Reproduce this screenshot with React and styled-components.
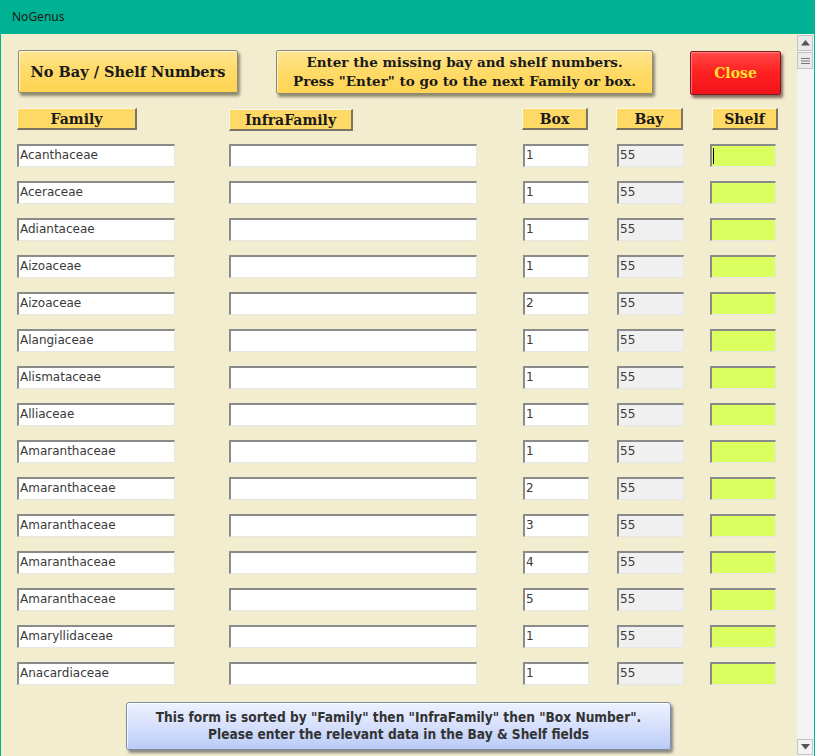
import React from 'react'
import styled, { createGlobalStyle } from 'styled-components'

const GlobalStyle = createGlobalStyle`
  html, body { margin: 0; padding: 0; background: #ffffff; }
  body { font-family: "DejaVu Sans", sans-serif; }
`

const rows = [
  ['Acanthaceae', '1'],
  ['Aceraceae', '1'],
  ['Adiantaceae', '1'],
  ['Aizoaceae', '1'],
  ['Aizoaceae', '2'],
  ['Alangiaceae', '1'],
  ['Alismataceae', '1'],
  ['Alliaceae', '1'],
  ['Amaranthaceae', '1'],
  ['Amaranthaceae', '2'],
  ['Amaranthaceae', '3'],
  ['Amaranthaceae', '4'],
  ['Amaranthaceae', '5'],
  ['Amaryllidaceae', '1'],
  ['Anacardiaceae', '1'],
]

const Window = styled.div`
  width: 815px;
  height: 756px;
  display: flex;
  flex-direction: column;
  box-sizing: border-box;
  border-left: 1px solid #00b294;
  border-right: 1px solid #00b294;
  overflow: hidden;
`

const TitleBar = styled.div`
  height: 34px;
  flex: none;
  background: #00b294;
  color: #1a1a1a;
  font-family: "Noto Sans", sans-serif;
  font-size: 12px;
  display: flex;
  align-items: center;
  padding-left: 11px;
  padding-bottom: 1px;
  box-sizing: border-box;
`

const Body = styled.div`
  flex: 1;
  display: flex;
  min-height: 0;
`

const Content = styled.div`
  flex: 1;
  background: #f3edd0;
  padding: 16px 0 0 16px;
  box-sizing: border-box;
`

const Toolbar = styled.div`
  display: flex;
  align-items: flex-start;
  height: 44px;
`

const SerifBold = `
  font-family: "DejaVu Serif", serif;
  font-weight: bold;
  color: #1a1a1a;
`

const YellowButton = styled.button`
  ${SerifBold}
  width: ${p => p.$w}px;
  height: ${p => p.$h}px;
  margin-left: ${p => p.$ml || 0}px;
  font-size: ${p => p.$fs || 14}px;
  line-height: 19px;
  padding: 0;
  border: 1px solid #8d8a7a;
  border-radius: 2px;
  background: linear-gradient(#ffe690 0%, #ffdb6b 45%, #ffd452 100%);
  box-shadow: 2px 3px 3px rgba(60, 55, 30, 0.55), inset 1px 1px 0 rgba(255,255,255,0.6);
  box-sizing: border-box;
  display: flex;
  flex-direction: column;
  align-items: center;
  justify-content: center;
  cursor: pointer;
`

const CloseButton = styled.button`
  ${SerifBold}
  color: #ffe22e;
  font-size: 14px;
  width: 91px;
  height: 44px;
  margin-left: 37px;
  margin-top: 1px;
  border: 1px solid #7a1a1a;
  border-radius: 2px;
  background: linear-gradient(#ff4a4a 0%, #ff2222 45%, #f0141c 100%);
  box-shadow: 2px 3px 3px rgba(60, 20, 20, 0.6), inset 1px 1px 0 rgba(255,160,160,0.6);
  box-sizing: border-box;
  cursor: pointer;
`

const Row = styled.div`
  display: flex;
  align-items: flex-start;
  margin-top: ${p => p.$mt}px;
`

const Header = styled.div`
  ${SerifBold}
  font-size: 14px;
  height: 22px;
  width: ${p => p.$w}px;
  margin-left: ${p => p.$ml}px;
  margin-top: ${p => p.$mt || 0}px;
  background: #ffd966;
  border-top: 1px solid #fbf6e6;
  border-left: 1px solid #fbf6e6;
  border-right: 2px solid #7a7562;
  border-bottom: 2px solid #7a7562;
  box-sizing: border-box;
  display: flex;
  align-items: center;
  justify-content: center;
  padding-top: 1px;
`

const Field = styled.div`
  position: relative;
  flex: none;
  height: 23px;
  width: ${p => p.$w}px;
  margin-left: ${p => p.$ml}px;
  background: ${p => p.$bg || '#ffffff'};
  border-top: 2px solid #8a8a8a;
  border-left: 2px solid #8a8a8a;
  border-right: 1px solid #e6e6e6;
  border-bottom: 1px solid #e6e6e6;
  box-sizing: border-box;
  font-family: "DejaVu Sans", sans-serif;
  font-size: 12px;
  color: #3a3a3a;
  line-height: 19px;
  padding-left: 1px;
  white-space: nowrap;
  overflow: hidden;
`

const Caret = styled.span`
  position: absolute;
  left: 1px;
  top: 2px;
  width: 1px;
  height: 16px;
  background: #000;
`

const InfoRow = styled.div`
  margin-top: 17px;
  padding-left: 109px;
`

const InfoBox = styled.div`
  width: 545px;
  height: 48px;
  box-sizing: border-box;
  border: 1px solid #7d8aa8;
  border-radius: 3px;
  background: linear-gradient(#eef2ff 0%, #d6e0fc 50%, #b9cbf6 100%);
  box-shadow: 2px 3px 3px rgba(50, 50, 60, 0.55), inset 1px 1px 0 rgba(255,255,255,0.8);
  font-family: "DejaVu Sans Condensed", "DejaVu Sans", sans-serif;
  font-weight: bold;
  font-size: 13.6px;
  color: #333333;
  line-height: 17px;
  display: flex;
  flex-direction: column;
  align-items: center;
  justify-content: center;
  padding-bottom: 1px;
`

const ScrollBar = styled.div`
  width: 17px;
  flex: none;
  background: #f3f3f3;
  display: flex;
  flex-direction: column;
  justify-content: space-between;
  padding: 1px 0;
  box-sizing: border-box;
`

const ScrollTop = styled.div`
  display: flex;
  flex-direction: column;
  gap: 1px;
`

const ScrollBtn = styled.div`
  width: 16px;
  height: ${p => p.$h || 16}px;
  box-sizing: border-box;
  border: 1px solid #c4c4c4;
  background: ${p => p.$plain ? '#f3f3f3' : '#eaeaea'};
  display: flex;
  align-items: center;
  justify-content: center;
`

function Arrow({ down }) {
  return (
    <svg width="9" height="6" viewBox="0 0 9 6">
      <path d={down ? 'M0 0 H9 L4.5 5.5 Z' : 'M0 5.5 H9 L4.5 0 Z'} fill="#555" />
    </svg>
  )
}

function Grip() {
  return (
    <svg width="9" height="8" viewBox="0 0 9 8">
      <path d="M0 1.5 H9 M0 4 H9 M0 6.5 H9" stroke="#777" strokeWidth="1" />
    </svg>
  )
}

function App() {
  return (
    <Window>
      <GlobalStyle />
      <TitleBar>NoGenus</TitleBar>
      <Body>
        <Content>
          <Toolbar>
            <YellowButton $w={220} $h={43} $ml={1} $fs={14.5}>No Bay / Shelf Numbers</YellowButton>
            <YellowButton $w={377} $h={44} $ml={38} $fs={13.5}>
              <span>Enter the missing bay and shelf numbers.</span>
              <span>Press "Enter" to go to the next Family or box.</span>
            </YellowButton>
            <CloseButton>Close</CloseButton>
          </Toolbar>
          <Row $mt={14}>
            <Header $w={120} $ml={0}>Family</Header>
            <Header $w={124} $ml={92} $mt={1}>InfraFamily</Header>
            <Header $w={66} $ml={169}>Box</Header>
            <Header $w={67} $ml={28}>Bay</Header>
            <Header $w={66} $ml={29}>Shelf</Header>
          </Row>
          {rows.map(([family, box], i) => (
            <Row key={i} $mt={i === 0 ? 13 : 14}>
              <Field $w={158} $ml={0}>{family}</Field>
              <Field $w={248} $ml={54}></Field>
              <Field $w={66} $ml={46}>{box}</Field>
              <Field $w={67} $ml={28} $bg="#f0f0f0">55</Field>
              <Field $w={66} $ml={26} $bg="#dbff5e">
                {i === 0 && <Caret />}
              </Field>
            </Row>
          ))}
          <InfoRow>
            <InfoBox>
              <span>This form is sorted by "Family" then "InfraFamily" then "Box Number".</span>
              <span>Please enter the relevant data in the Bay &amp; Shelf fields</span>
            </InfoBox>
          </InfoRow>
        </Content>
        <ScrollBar>
          <ScrollTop>
            <ScrollBtn><Arrow /></ScrollBtn>
            <ScrollBtn $h={17}><Grip /></ScrollBtn>
          </ScrollTop>
          <ScrollBtn $plain><Arrow down /></ScrollBtn>
        </ScrollBar>
      </Body>
    </Window>
  )
}

export default App
